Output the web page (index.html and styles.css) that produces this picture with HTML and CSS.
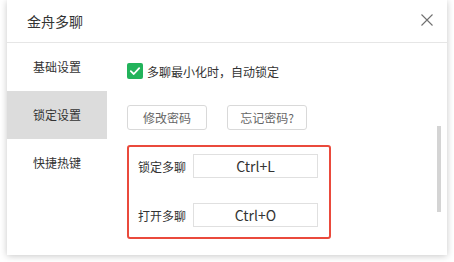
FILE: index.html
```html
<!DOCTYPE html>
<html lang="zh-CN">
<head>
    <meta charset="UTF-8">
    <title>金舟多聊</title>
    <link rel="stylesheet" href="styles.css">
</head>
<body>
    <div class="dialog">
        <!-- Header -->
        <div class="header">
            <span class="title">金舟多聊</span>
            <svg class="close" width="12" height="12" viewBox="0 0 12 12">
                <path d="M0.5 0.5 L11.5 11.5 M11.5 0.5 L0.5 11.5" stroke="#707070" stroke-width="1.1" fill="none"/>
            </svg>
        </div>

        <div class="body">
            <!-- Sidebar -->
            <div class="sidebar">
                <div class="nav-item">基础设置</div>
                <div class="nav-item active">锁定设置</div>
                <div class="nav-item">快捷热键</div>
            </div>

            <!-- Content -->
            <div class="content">
                <label class="check-row">
                    <span class="checkbox">
                        <svg width="16" height="16" viewBox="0 0 16 16">
                            <path d="M3.8 8.2 L6.8 11 L12.2 5.2" stroke="#fff" stroke-width="1.8" fill="none" stroke-linecap="round" stroke-linejoin="round"/>
                        </svg>
                    </span>
                    多聊最小化时，自动锁定
                </label>

                <div class="btn-row">
                    <button class="btn">修改密码</button>
                    <button class="btn">忘记密码?</button>
                </div>

                <div class="hotkeys">
                    <div class="hotkey-row">
                        <span class="hotkey-label">锁定多聊</span>
                        <div class="hotkey-input">Ctrl+L</div>
                    </div>
                    <div class="hotkey-row">
                        <span class="hotkey-label">打开多聊</span>
                        <div class="hotkey-input">Ctrl+O</div>
                    </div>
                </div>
            </div>

            <div class="scrollbar"></div>
        </div>
    </div>
</body>
</html>
```

FILE: styles.css
```css
* {
    margin: 0;
    padding: 0;
    box-sizing: border-box;
    font-family: "Noto Sans CJK SC", "Noto Sans", sans-serif;
}

body {
    background: #fff;
    width: 454px;
    height: 262px;
    overflow: hidden;
}

/* Dialog window */
.dialog {
    margin: 0 7px;
    width: 440px;
    height: 255px;
    background: #fff;
    box-shadow: 0 1px 7px rgba(0, 0, 0, 0.22);
    display: flex;
    flex-direction: column;
}

.header {
    height: 43px;
    border-bottom: 1px solid #e6e6e6;
    display: flex;
    align-items: center;
    justify-content: space-between;
    padding: 0 14px 0 20px;
}

.title {
    font-size: 14px;
    color: #333;
}

.close {
    display: block;
    margin-top: -2px;
}

.body {
    flex: 1;
    display: flex;
    position: relative;
}

/* Sidebar */
.sidebar {
    width: 100px;
}

.nav-item {
    height: 48px;
    line-height: 48px;
    text-align: center;
    font-size: 12px;
    color: #333;
}

.nav-item.active {
    background: #dcdcdc;
}

/* Content */
.content {
    flex: 1;
    padding: 20px 0 0 20px;
}

.check-row {
    display: flex;
    align-items: center;
    gap: 4px;
    height: 16px;
    font-size: 12px;
    color: #333;
}

.checkbox {
    width: 16px;
    height: 16px;
    border-radius: 2px;
    background: #22b35b;
    display: flex;
}

.btn-row {
    display: flex;
    gap: 20px;
    margin-top: 26px;
}

.btn {
    width: 80px;
    height: 25px;
    background: #fff;
    border: 1px solid #d9d9d9;
    border-radius: 3px;
    font-size: 12px;
    color: #666;
}

.hotkeys {
    margin-top: 15px;
    width: 204px;
    height: 94px;
    border: 2px solid #ea4a3c;
    border-radius: 3px;
    padding: 7px 0 0 9px;
    display: flex;
    flex-direction: column;
    gap: 25px;
}

.hotkey-row {
    display: flex;
    align-items: center;
    gap: 7px;
}

.hotkey-label {
    font-size: 12px;
    color: #333;
}

.hotkey-input {
    width: 125px;
    height: 24px;
    border: 1px solid #e0e0e0;
    font-size: 14px;
    color: #333;
    text-align: center;
    line-height: 22px;
}

.scrollbar {
    position: absolute;
    right: 6px;
    top: 83px;
    width: 4px;
    height: 86px;
    background: #d4d4d4;
}
```
